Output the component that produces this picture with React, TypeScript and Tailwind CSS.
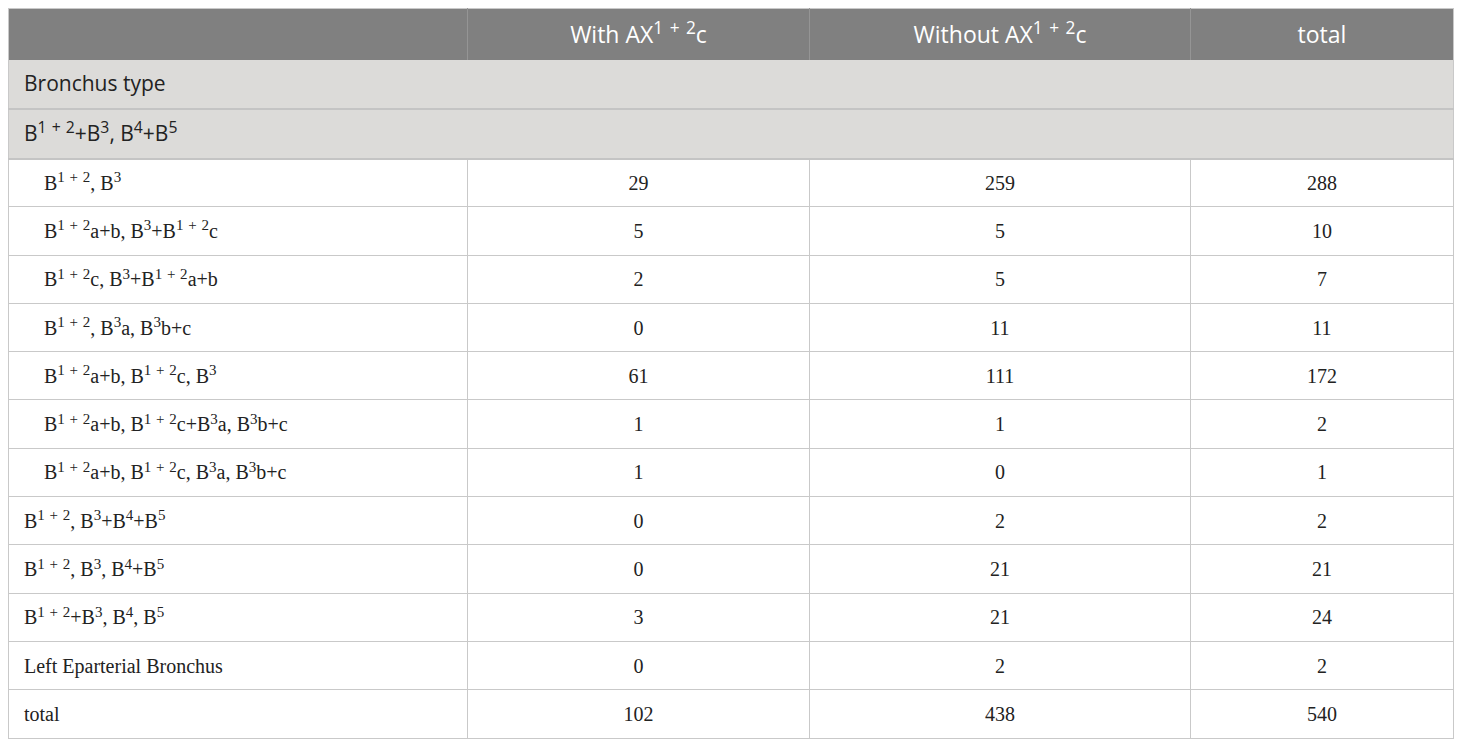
import React from "react";

type Row = { label: React.ReactNode; indent: boolean; a: string; b: string; c: string };

const S = ({ children }: { children: React.ReactNode }) => <sup className="[word-spacing:1px]">{children}</sup>;
const P = () => <S>1 + 2</S>;

const rows: Row[] = [
  { label: <>B<P />, B<S>3</S></>, indent: true, a: "29", b: "259", c: "288" },
  { label: <>B<P />a+b, B<S>3</S>+B<P />c</>, indent: true, a: "5", b: "5", c: "10" },
  { label: <>B<P />c, B<S>3</S>+B<P />a+b</>, indent: true, a: "2", b: "5", c: "7" },
  { label: <>B<P />, B<S>3</S>a, B<S>3</S>b+c</>, indent: true, a: "0", b: "11", c: "11" },
  { label: <>B<P />a+b, B<P />c, B<S>3</S></>, indent: true, a: "61", b: "111", c: "172" },
  { label: <>B<P />a+b, B<P />c+B<S>3</S>a, B<S>3</S>b+c</>, indent: true, a: "1", b: "1", c: "2" },
  { label: <>B<P />a+b, B<P />c, B<S>3</S>a, B<S>3</S>b+c</>, indent: true, a: "1", b: "0", c: "1" },
  { label: <>B<P />, B<S>3</S>+B<S>4</S>+B<S>5</S></>, indent: false, a: "0", b: "2", c: "2" },
  { label: <>B<P />, B<S>3</S>, B<S>4</S>+B<S>5</S></>, indent: false, a: "0", b: "21", c: "21" },
  { label: <>B<P />+B<S>3</S>, B<S>4</S>, B<S>5</S></>, indent: false, a: "3", b: "21", c: "24" },
  { label: <>Left Eparterial Bronchus</>, indent: false, a: "0", b: "2", c: "2" },
  { label: <>total</>, indent: false, a: "102", b: "438", c: "540" },
];

export default function App() {
  return (
    <div className="bg-white w-[1460px] h-[746px] pt-[8px] pl-[8px]">
      <table className="table-fixed border-collapse w-[1445px] border border-[#c9c9c9]">
        <colgroup>
          <col className="w-[459px]" />
          <col className="w-[342px]" />
          <col className="w-[381px]" />
          <col className="w-[263px]" />
        </colgroup>
        <thead>
          <tr className="h-[51px] bg-[#808080] text-white text-[23px] font-['Open_Sans',sans-serif]">
            <th className="border-r border-[#959595] font-normal"></th>
            <th className="border-r border-[#959595] font-normal text-center">
              With AX<sup className="[word-spacing:2px]">1 + 2</sup>c
            </th>
            <th className="border-r border-[#959595] font-normal text-center">
              Without AX<sup className="[word-spacing:2px]">1 + 2</sup>c
            </th>
            <th className="font-normal text-center">total</th>
          </tr>
        </thead>
        <tbody>
          <tr className="h-[49px] bg-[#dcdbd9] border-b-2 border-[#c4c4c4]">
            <td colSpan={4} className="pl-[15px] text-[21px] text-[#222] font-['Open_Sans',sans-serif]">
              Bronchus type
            </td>
          </tr>
          <tr className="h-[50px] bg-[#dcdbd9] border-b-2 border-[#c4c4c4]">
            <td colSpan={4} className="pl-[15px] text-[21px] text-[#222] font-['Open_Sans',sans-serif]">
              B<sup className="[word-spacing:1px]">1 + 2</sup>+B<sup>3</sup>, B<sup>4</sup>+B<sup>5</sup>
            </td>
          </tr>
          {rows.map((r, i) => (
            <tr
              key={i}
              className="h-[48.3px] text-[20px] text-[#222] font-['Liberation_Serif',serif] border-b border-[#c9c9c9]"
            >
              <td className={`border-r border-[#c9c9c9] ${r.indent ? "pl-[35px]" : "pl-[15px]"}`}>{r.label}</td>
              <td className="border-r border-[#c9c9c9] text-center">{r.a}</td>
              <td className="border-r border-[#c9c9c9] text-center">{r.b}</td>
              <td className="text-center">{r.c}</td>
            </tr>
          ))}
        </tbody>
      </table>
    </div>
  );
}
